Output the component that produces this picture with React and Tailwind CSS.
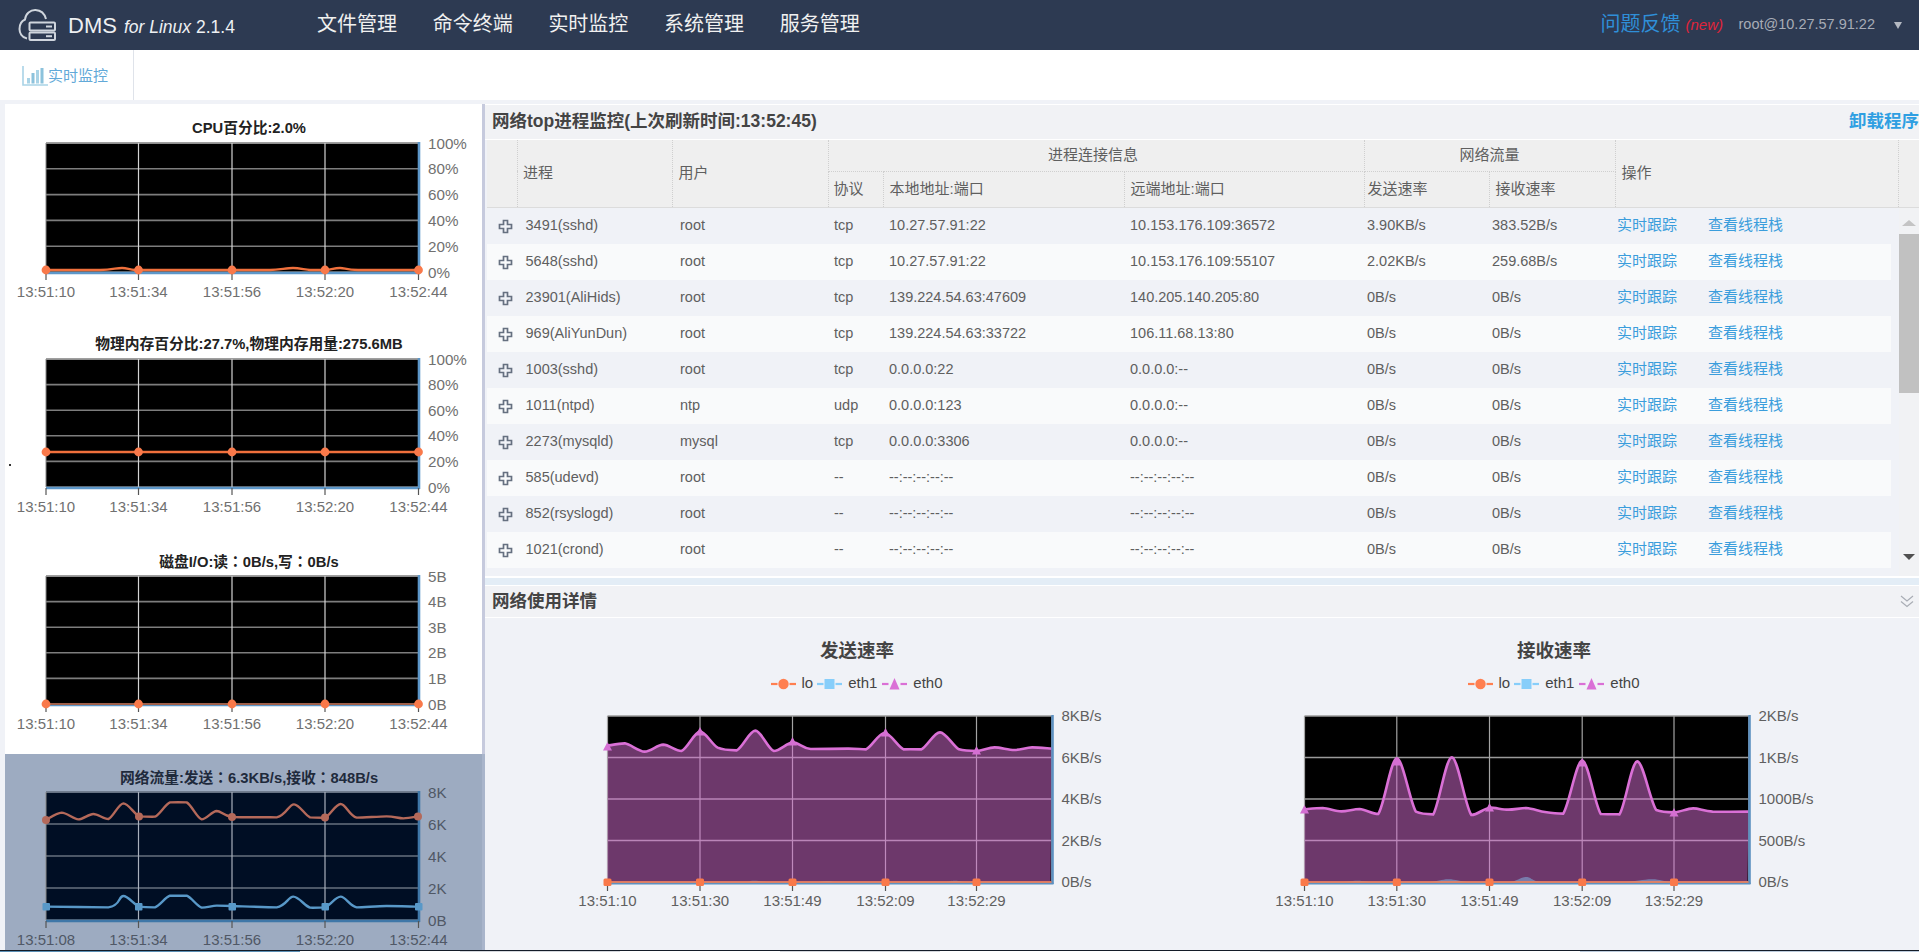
import React from "react";

const FONT = '"Liberation Sans","Noto Sans CJK SC",sans-serif';

function smooth(pts) {
  let d = `M${pts[0][0]} ${pts[0][1]}`;
  for (let i = 0; i < pts.length - 1; i++) {
    const p0 = pts[Math.max(i - 1, 0)];
    const p1 = pts[i];
    const p2 = pts[i + 1];
    const p3 = pts[Math.min(i + 2, pts.length - 1)];
    const t = 0.16;
    let c1y = p1[1] + (p2[1] - p0[1]) * t;
    let c2y = p2[1] - (p3[1] - p1[1]) * t;
    const lo = Math.min(p1[1], p2[1]);
    const hi = Math.max(p1[1], p2[1]);
    c1y = Math.min(hi, Math.max(lo, c1y));
    c2y = Math.min(hi, Math.max(lo, c2y));
    const c1x = p1[0] + (p2[0] - p0[0]) * t;
    const c2x = p2[0] - (p3[0] - p1[0]) * t;
    d += ` C${c1x.toFixed(1)} ${c1y.toFixed(1)} ${c2x.toFixed(1)} ${c2y.toFixed(1)} ${p2[0]} ${p2[1]}`;
  }
  return d;
}

const VX = [46, 138.5, 232, 325, 418.5];

function MiniChart({ top, bottom, yLabels, xLabels, svgTop, height, dark, children }) {
  const n = yLabels.length - 1;
  const ys = yLabels.map((_, i) => top + ((bottom - top) * i) / n);
  const bg = dark ? "#000e24" : "#000000";
  const txt = dark ? "#505866" : "#707070";
  return (
    <svg className="block overflow-visible" width="477" height={height} viewBox={`5 ${svgTop} 477 ${height}`}>
      <rect x={46} y={top} width={372.5} height={bottom - top} fill={bg} />
      {ys.map((y, i) => (
        <line key={i} x1={46} x2={418} y1={y} y2={y} stroke={dark ? "#66707e" : "#7d7d7d"} strokeWidth="1.6" />
      ))}
      <line x1={46} x2={418} y1={top} y2={top} stroke={dark ? "#6f7b8e" : "#a0a0a0"} strokeWidth="1.6" />
      {VX.slice(1, 4).map((x) => (
        <line key={x} x1={x} x2={x} y1={top} y2={bottom} stroke={dark ? "#a8b0bc" : "#d4d4d4"} strokeWidth="1.2" />
      ))}
      <line x1={46} x2={46} y1={top} y2={bottom} stroke="#888888" strokeWidth="1" />
      <line x1={419} x2={419} y1={top - 1} y2={bottom + 2} stroke={dark ? "#3f77a8" : "#5d97c9"} strokeWidth="2.6" />
      <line x1={46} x2={420} y1={bottom + 1} y2={bottom + 1} stroke={dark ? "#3f77a8" : "#5d97c9"} strokeWidth="2.6" />
      {VX.map((x) => (
        <line key={x} x1={x} x2={x} y1={bottom + 1} y2={bottom + 8} stroke="#555555" strokeWidth="1.2" />
      ))}
      {children}
      {yLabels.map((l, i) => (
        <text key={l} x={428} y={ys[i] + 5.5} fontSize="15.2" fill={txt} fontFamily={FONT}>
          {l}
        </text>
      ))}
      {xLabels.map((l, i) => (
        <text key={l + i} x={VX[i]} y={bottom + 24.5} fontSize="15" fill={txt} textAnchor="middle" fontFamily={FONT}>
          {l}
        </text>
      ))}
    </svg>
  );
}

function Dots({ y, fill = "#f9794a" }) {
  return VX.map((x) => <circle key={x} cx={x} cy={y} r="4.4" fill={fill} />);
}

const PCT = ["100%", "80%", "60%", "40%", "20%", "0%"];
const XL = ["13:51:10", "13:51:34", "13:51:56", "13:52:20", "13:52:44"];

const netSend = [[138,240],[185,218],[235,238],[280,222],[325,237],[370,190],[418,229],[465,230],[510,187],[560,187],[605,238],[650,213],[697,231],[830,232],[882,193],[930,232],[975,233],[1022,192],[1070,233],[1160,229],[1210,235],[1254,229]].map(([x, y]) => [x / 3, 740 + y / 3]);
const netRecv = [[138,500],[325,502],[370,468],[418,500],[465,502],[510,467],[560,467],[605,503],[650,497],[697,498],[830,502],[880,470],[930,503],[975,502],[1022,470],[1070,502],[1160,498],[1254,500]].map(([x, y]) => [x / 3, 740 + y / 3]);

const leftEth0 = [[322,527],[365,520],[415,545],[462,524],[508,543],[555,485],[600,533],[648,541],[695,482],[742,543],[790,517],[835,537],[930,536],[975,538],[1022,489],[1070,538],[1115,538],[1162,487],[1210,538],[1255,543],[1300,532],[1350,540],[1395,532],[1445,536]].map(([x, y]) => [480 + x / 2.529, 570 + y / 3]);
const rightEth0 = [[148,718],[190,714],[233,724],[275,717],[318,732],[361,565],[405,725],[445,733],[488,562],[533,735],[575,713],[618,719],[660,714],[703,726],[745,731],[789,572],[832,732],[875,733],[916,574],[960,720],[1002,727],[1045,715],[1090,725],[1173,725]].map(([x, y]) => [1240 + x / 2.309, 570 + y / 3]);
const leftEth1 = [[322,937],[640,937],[690,932],[740,937],[840,937],[880,933],[920,937],[1150,937],[1200,932],[1250,937],[1445,937]].map(([x, y]) => [480 + x / 2.529, 570 + y / 3]);
const rightEth1 = [[148,937],[225,937],[270,932],[318,937],[430,937],[480,928],[530,937],[618,937],[660,921],[703,937],[875,937],[950,928],[1002,937],[1130,937],[1173,932]].map(([x, y]) => [1240 + x / 2.309, 570 + y / 3]);

function BigChart({ x0, x1, vx, svgLeft, yLabels, eth0, eth1, markers }) {
  const top = 716;
  const bottom = 882;
  const ys = yLabels.map((_, i) => top + ((bottom - top) * i) / (yLabels.length - 1));
  const area = `${smooth(eth0)} L${x1 - 1} ${bottom} L${x0} ${bottom} Z`;
  const area1 = `${smooth(eth1)} L${x1 - 1} ${bottom} L${x0} ${bottom} Z`;
  return (
    <svg className="block overflow-visible" width="697" height="250" viewBox={`${svgLeft} 700 697 250`}>
      <rect x={x0} y={top} width={x1 - x0} height={bottom - top} fill="#000000" />
      {ys.map((y) => (
        <line key={y} x1={x0} x2={x1} y1={y} y2={y} stroke="#9a9a9a" strokeWidth="1.3" />
      ))}
      {vx.slice(1).map((x) => (
        <line key={x} x1={x} x2={x} y1={top} y2={bottom} stroke="#a4a4a4" strokeWidth="1.2" />
      ))}
      <line x1={x0} x2={x0} y1={top} y2={bottom} stroke="#a4a4a4" strokeWidth="1.2" />
      <path d={area} fill="#da70d6" fillOpacity="0.5" />
      <path d={area1} fill="#87cefa" fillOpacity="0.45" />
      <path d={smooth(eth0)} fill="none" stroke="#da70d6" strokeWidth="2.6" />
      <line x1={x1 + 1} x2={x1 + 1} y1={top - 1} y2={bottom + 2} stroke="#5d90c0" strokeWidth="2.6" />
      <line x1={x0} x2={x1 + 2} y1={bottom + 1.5} y2={bottom + 1.5} stroke="#5d90c0" strokeWidth="2.2" />
      <line x1={x0} x2={x1} y1={bottom} y2={bottom} stroke="#f47a4c" strokeWidth="1.4" />
      {vx.map((x) => (
        <line key={x} x1={x} x2={x} y1={bottom + 2} y2={bottom + 9} stroke="#555555" strokeWidth="1.2" />
      ))}
      {markers.map(([x, y]) => (
        <path key={x} d={`M${x} ${y - 5} L${x + 4.5} ${y + 3.5} L${x - 4.5} ${y + 3.5} Z`} fill="#d46fd2" />
      ))}
      {vx.map((x) => (
        <rect key={x} x={x - 4} y={bottom - 3.5} width="8" height="7.5" rx="1.5" fill="#f9794a" />
      ))}
      {yLabels.map((l, i) => (
        <text key={l} x={x1 + 10} y={ys[i] + 5} fontSize="15" fill="#606060" fontFamily={FONT}>
          {l}
        </text>
      ))}
      {["13:51:10", "13:51:30", "13:51:49", "13:52:09", "13:52:29"].map((l, i) => (
        <text key={l} x={vx[i]} y={bottom + 24} fontSize="15" fill="#606060" textAnchor="middle" fontFamily={FONT}>
          {l}
        </text>
      ))}
    </svg>
  );
}

function LegendIcon({ color, shape }) {
  return (
    <svg width="25" height="14" viewBox="0 0 25 14" className="shrink-0">
      <line x1="0" x2="6.5" y1="7" y2="7" stroke={color} strokeWidth="2.2" />
      <line x1="18.5" x2="25" y1="7" y2="7" stroke={color} strokeWidth="2.2" />
      {shape === "circle" && <circle cx="12.5" cy="7" r="5.2" fill={color} />}
      {shape === "square" && <rect x="7.5" y="2" width="10" height="10" fill={color} />}
      {shape === "tri" && <path d="M12.5 1 L17.5 12.5 L7.5 12.5 Z" fill={color} />}
    </svg>
  );
}

function Legend() {
  return (
    <div className="flex items-center justify-center h-5 text-[15px] text-[#444444] mt-[11px]">
      <LegendIcon color="#ff7f50" shape="circle" />
      <span className="ml-[5px] mr-[4px]">lo</span>
      <LegendIcon color="#87cefa" shape="square" />
      <span className="ml-[6px] mr-[5px]">eth1</span>
      <LegendIcon color="#da70d6" shape="tri" />
      <span className="ml-[6px]">eth0</span>
    </div>
  );
}

const rows = [
  ["3491(sshd)", "root", "tcp", "10.27.57.91:22", "10.153.176.109:36572", "3.90KB/s", "383.52B/s"],
  ["5648(sshd)", "root", "tcp", "10.27.57.91:22", "10.153.176.109:55107", "2.02KB/s", "259.68B/s"],
  ["23901(AliHids)", "root", "tcp", "139.224.54.63:47609", "140.205.140.205:80", "0B/s", "0B/s"],
  ["969(AliYunDun)", "root", "tcp", "139.224.54.63:33722", "106.11.68.13:80", "0B/s", "0B/s"],
  ["1003(sshd)", "root", "tcp", "0.0.0.0:22", "0.0.0.0:--", "0B/s", "0B/s"],
  ["1011(ntpd)", "ntp", "udp", "0.0.0.0:123", "0.0.0.0:--", "0B/s", "0B/s"],
  ["2273(mysqld)", "mysql", "tcp", "0.0.0.0:3306", "0.0.0.0:--", "0B/s", "0B/s"],
  ["585(udevd)", "root", "--", "--:--:--:--:--", "--:--:--:--:--", "0B/s", "0B/s"],
  ["852(rsyslogd)", "root", "--", "--:--:--:--:--", "--:--:--:--:--", "0B/s", "0B/s"],
  ["1021(crond)", "root", "--", "--:--:--:--:--", "--:--:--:--:--", "0B/s", "0B/s"],
];

function Cols({ last }) {
  return (
    <colgroup>
      <col className="w-[30.5px]" />
      <col className="w-[154.5px]" />
      <col className="w-[156px]" />
      <col className="w-[55px]" />
      <col className="w-[241px]" />
      <col className="w-[240px]" />
      <col className="w-[125px]" />
      <col className="w-[126px]" />
      <col className={last ? "w-[276px]" : "w-[283px]"} />
      {!last && <col className="w-[21px]" />}
    </colgroup>
  );
}

function Plus() {
  return (
    <svg width="15" height="15" viewBox="0 0 15 15" className="block ml-[11px]">
      <path d="M5.5 1.5 H9.5 V5.5 H13.5 V9.5 H9.5 V13.5 H5.5 V9.5 H1.5 V5.5 H5.5 Z" fill="none" stroke="#667080" strokeWidth="1.7" />
    </svg>
  );
}

const th = "font-normal text-left align-middle border-[#cfcfcf] border-dotted";
const CC = "font-['Noto_Sans_CJK_TC']";

export default function App() {
  return (
    <div className="w-[1919px] h-[952px] overflow-hidden bg-[#f0f2f7] flex flex-col text-[#5f5f5f]" style={{ fontFamily: FONT }}>
      {/* top bar */}
      <header className="h-[50px] shrink-0 bg-[#2d3a52] flex items-center relative">
        <svg width="42" height="36" viewBox="15 8 42 36" className="ml-[15px] shrink-0">
          <path d="M27 39.5 C21.5 38.5 19.5 33.5 19.5 30 C19.5 25.5 21.5 22 25 20.5 C25.5 14.5 30.5 10.8 35.5 11 C40.5 11.2 44.5 14.5 46 20" fill="none" stroke="#cfd5dd" strokeWidth="2" />
          <rect x="29.5" y="23.5" width="25.5" height="8" rx="1" fill="#2d3a52" stroke="#cfd5dd" strokeWidth="2" />
          <rect x="29.5" y="33.5" width="25.5" height="7.5" rx="1" fill="#2d3a52" stroke="#cfd5dd" strokeWidth="2" />
          <line x1="46" x2="52" y1="27.5" y2="27.5" stroke="#cfd5dd" strokeWidth="2" />
          <line x1="46" x2="52" y1="37.2" y2="37.2" stroke="#cfd5dd" strokeWidth="2" />
        </svg>
        <div className="ml-[11px] flex items-baseline text-[#eef0f3] w-[249px] shrink-0 whitespace-nowrap">
          <span className="text-[22px]">DMS</span>
          <span className="text-[17.5px] italic ml-[7px]">for Linux</span>
          <span className="text-[17.5px] ml-[5px]">2.1.4</span>
        </div>
        <nav className="flex gap-[35.7px] text-[20px] text-[#f0f0f0] -mt-[3px]">
          <span>文件管理</span>
          <span>命令终端</span>
          <span>实时监控</span>
          <span>系统管理</span>
          <span>服务管理</span>
        </nav>
        <div className="ml-auto flex items-center mr-[17px]">
          <span className="text-[20px] text-[#2f8fd8] -mt-[2px] -ml-[1px]">问题反馈</span>
          <span className="text-[15px] italic text-[#e0243a] ml-[5px] w-[53px]">(new)</span>
          <span className="text-[14.5px] text-[#a7acb6]">root@10.27.57.91:22</span>
          <span className="ml-[19px] w-0 h-0 border-l-[4.5px] border-r-[4.5px] border-t-[7px] border-l-transparent border-r-transparent border-t-[#b4b9c2]" />
        </div>
      </header>

      {/* tab bar */}
      <div className="h-[50px] shrink-0 bg-white flex">
        <div className="w-[134px] border-r border-[#dfe3ea] flex items-center pl-[22px] pt-[3px]">
          <svg width="26" height="22" viewBox="0 0 26 22" className="shrink-0 -mt-[2px]">
            <path d="M1 1 V20 H26" fill="none" stroke="#a9d3e6" strokeWidth="1.6" />
            <rect x="5" y="13" width="3" height="5.5" fill="#a9d3e6" />
            <rect x="9.5" y="8" width="3" height="10.5" fill="#8cc2dc" />
            <rect x="14" y="5" width="3" height="13.5" fill="#a9d3e6" />
            <rect x="18.5" y="3" width="3" height="15.5" fill="#8cc2dc" />
          </svg>
          <span className="text-[15px] text-[#62a9d8] whitespace-nowrap">实时监控</span>
        </div>
      </div>

      <div className="flex-1 min-h-0 flex pt-[4px] relative">
        <span className="absolute left-[9px] top-[364px] w-[2px] h-[2px] bg-[#333333]" />
        {/* left column */}
        <aside className="w-[477px] ml-[5px] shrink-0 bg-white flex flex-col overflow-hidden">
          <div className="h-[216px] shrink-0">
            <div className="h-[33px] pt-[15px] pl-[11px] text-center text-[14.75px] leading-[18px] font-bold text-[#222222]">CPU百分比:2.0%</div>
            <MiniChart top={143} bottom={272} svgTop={137} height={183} yLabels={PCT} xLabels={XL}>
              <path d={smooth([[46,270],[100,270],[122,268],[135,270],[160,270],[232,270],[270,270],[293,268],[310,270],[325,270],[340,268],[358,270],[419,270]])} fill="none" stroke="#f0703c" strokeWidth="2.4" />
              <Dots y={270} />
            </MiniChart>
          </div>
          <div className="h-[217px] shrink-0">
            <div className="h-[33px] pt-[15px] pl-[11px] text-center text-[14.75px] leading-[18px] font-bold text-[#222222]">物理内存百分比:27.7%,物理内存用量:275.6MB</div>
            <MiniChart top={359} bottom={487} svgTop={353} height={184} yLabels={PCT} xLabels={XL}>
              <line x1={46} x2={419} y1={452} y2={452} stroke="#f0703c" strokeWidth="2.6" />
              <Dots y={452} />
            </MiniChart>
          </div>
          <div className="h-[217px] shrink-0">
            <div className="h-[33px] pt-[15px] pl-[11px] text-center text-[14.75px] leading-[18px] font-bold text-[#222222]">磁盘I/O:读<span className={CC}>：</span>0B/s,写<span className={CC}>：</span>0B/s</div>
            <MiniChart top={576} bottom={704} svgTop={570} height={184} yLabels={["5B", "4B", "3B", "2B", "1B", "0B"]} xLabels={XL}>
              <line x1={46} x2={419} y1={704} y2={704} stroke="#a0604a" strokeWidth="2" />
              <Dots y={704} />
            </MiniChart>
          </div>
          <div className="flex-1 min-h-0 bg-[#9dabc1] overflow-hidden">
            <div className="h-[32px] pt-[14px] pl-[11px] text-center text-[14.75px] leading-[18px] font-bold text-[#1f2a3c]">网络流量:发送<span className={CC}>：</span>6.3KB/s,接收<span className={CC}>：</span>848B/s</div>
            <MiniChart top={792} bottom={920} svgTop={786} height={164} dark yLabels={["8K", "6K", "4K", "2K", "0B"]} xLabels={["13:51:08", "13:51:34", "13:51:56", "13:52:20", "13:52:44"]}>
              <path d={smooth(netSend)} fill="none" stroke="#b4695a" strokeWidth="2.4" />
              <path d={smooth(netRecv)} fill="none" stroke="#5898c8" strokeWidth="2.4" />
              {[[46,820],[139,816.5],[232,817],[325,817.5],[418,816.5]].map(([x, y]) => (
                <circle key={x} cx={x} cy={y} r="4" fill="#b4695a" />
              ))}
              {VX.map((x) => (
                <rect key={x} x={x - 3.5} y={903} width="7.5" height="7.5" rx="1" fill="#5898c8" />
              ))}
            </MiniChart>
          </div>
        </aside>

        {/* splitter */}
        <div className="w-[3px] shrink-0 flex flex-col">
          <div className="h-[650px] bg-[#c6cadd]" />
          <div className="flex-1 bg-[#a9b5cb]" />
        </div>

        {/* right column */}
        <main className="w-[1434px] shrink-0 flex flex-col">
          <section className="h-[35px] shrink-0 border-t border-white flex items-center justify-between pl-[7px] pb-[2px] bg-[#f1f2f5]">
            <h2 className="text-[17.5px] font-bold text-[#444444] whitespace-nowrap">网络top进程监控(上次刷新时间:13:52:45)</h2>
            <a className="text-[17.5px] font-bold text-[#2f9fe2] whitespace-nowrap -ml-[1px]">卸载程序</a>
          </section>
          <div className="h-[1px] shrink-0 bg-white" />

          <div className="pl-[2px] shrink-0">
            <table className="table-fixed border-collapse w-[1432px] text-[15px] text-[#5f5f5f] bg-[#efefef]">
              <Cols />
              <thead>
                <tr className="h-[31px]">
                  <th rowSpan={2} className={`${th} border-r`} />
                  <th rowSpan={2} className={`${th} border-r pl-[5px]`}>进程</th>
                  <th rowSpan={2} className={`${th} border-r pl-[6px]`}>用户</th>
                  <th colSpan={3} className={`${th} border-r border-b pr-[6px]`} style={{ textAlign: "center" }}>进程连接信息</th>
                  <th colSpan={2} className={`${th} border-r border-b`} style={{ textAlign: "center" }}>网络流量</th>
                  <th rowSpan={2} className={`${th} border-r pl-[6px]`}>操作</th>
                  <th rowSpan={2} className={th} />
                </tr>
                <tr className="h-[36px]">
                  <th className={`${th} border-r pl-[5px]`}>协议</th>
                  <th className={`${th} border-r pl-[6px]`}>本地地址:端口</th>
                  <th className={`${th} border-r pl-[6px]`}>远端地址:端口</th>
                  <th className={`${th} border-r pl-[3px]`}>发送速率</th>
                  <th className={`${th} border-r pl-[6px]`}>接收速率</th>
                </tr>
              </thead>
            </table>
          </div>
          <div className="h-[1px] shrink-0 bg-[#dcdcdc] ml-[2px]" />

          <div className="h-[368px] shrink-0 flex pl-[2px]">
            <div className="w-[1404px] shrink-0">
              <table className="table-fixed border-collapse w-[1404px] text-[14.5px] text-[#5f5f5f]">
                <Cols last />
                <tbody>
                  {rows.map((r, i) => (
                    <tr key={r[0]} className={i % 2 === 0 ? "h-[36px] bg-[#f0f2f7]" : "h-[36px] bg-[#f9fafb]"}>
                      <td><Plus /></td>
                      <td className="pl-[8px]">{r[0]}</td>
                      <td className="pl-[8px]">{r[1]}</td>
                      <td className="pl-[6px]">{r[2]}</td>
                      <td className="pl-[6px]">{r[3]}</td>
                      <td className="pl-[6px]">{r[4]}</td>
                      <td className="pl-[3px]">{r[5]}</td>
                      <td className="pl-[3px]">{r[6]}</td>
                      <td className="pl-[2px] pb-[2px] text-[15px] text-[#3a9ddc]">
                        <span className="inline-block w-[91px]">实时跟踪</span>
                        <span>查看线程栈</span>
                      </td>
                    </tr>
                  ))}
                </tbody>
              </table>
            </div>
            <div className="w-[8px] shrink-0" />
            <div className="w-[20px] shrink-0 bg-[#f1f2f4] flex flex-col items-center">
              <span className="mt-[12px] w-0 h-0 border-l-[7px] border-r-[7px] border-b-[6px] border-l-transparent border-r-transparent border-b-[#c4c4c4]" />
              <span className="mt-[8px] w-[20px] h-[159px] bg-[#c1c1c1]" />
              <span className="mt-[161px] w-0 h-0 border-l-[6px] border-r-[6px] border-t-[6px] border-l-transparent border-r-transparent border-t-[#505050]" />
            </div>
          </div>

          <div className="h-[1.5px] shrink-0 bg-white" />
          <div className="h-[7px] shrink-0 bg-[#e3edf6]" />
          <div className="h-[1px] shrink-0 bg-white" />
          <section className="h-[32px] shrink-0 flex items-center justify-between pl-[7px] pr-[5px] bg-[#f1f2f5] border-b border-white">
            <h2 className="text-[17.5px] font-bold text-[#444444]">网络使用详情</h2>
            <svg width="14" height="14" viewBox="0 0 14 14">
              <path d="M1 2 L7 7 L13 2 M1 7.5 L7 12.5 L13 7.5" fill="none" stroke="#a9adb5" strokeWidth="1.2" />
            </svg>
          </section>

          <div className="flex-1 min-h-0 flex pl-[23.5px] overflow-hidden">
            <div className="w-[697px] shrink-0 pt-[21px]">
              <div className="text-center text-[18.5px] leading-[24px] font-bold text-[#444444]">发送速率</div>
              <Legend />
              <div className="mt-[6px]">
                <BigChart x0={607} x1={1051} vx={[607, 699.5, 792, 885, 976]} svgLeft={508.5} yLabels={["8KB/s", "6KB/s", "4KB/s", "2KB/s", "0B/s"]} eth0={leftEth0} eth1={leftEth1}
                  markers={[[607, 747], [699.5, 732], [792, 742], [885, 733], [976, 751]]} />
              </div>
            </div>
            <div className="w-[697px] shrink-0 pt-[21px]">
              <div className="text-center text-[18.5px] leading-[24px] font-bold text-[#444444]">接收速率</div>
              <Legend />
              <div className="mt-[6px]">
                <BigChart x0={1304} x1={1748} vx={[1304, 1396.3, 1489, 1581.7, 1673.5]} svgLeft={1205.5} yLabels={["2KB/s", "1KB/s", "1000B/s", "500B/s", "0B/s"]} eth0={rightEth0} eth1={rightEth1}
                  markers={[[1304, 810], [1396.3, 762], [1489, 808], [1581.7, 763], [1673.5, 813]]} />
              </div>
            </div>
          </div>
        </main>
      </div>

      {/* strip of whatever lies below the page */}
      <div className="h-[2px] shrink-0 flex flex-col">
        <div className="h-[1px] bg-[#141c28]" />
        <div className="h-[1px] flex">
          <div className="w-[300px] bg-[#5b8fb5]" />
          <div className="w-[160px] bg-white" />
          <div className="w-[160px] bg-[#d5d8dd]" />
          <div className="w-[160px] bg-white" />
          <div className="w-[160px] bg-[#d5d8dd]" />
          <div className="w-[320px] bg-white" />
          <div className="w-[160px] bg-[#d5d8dd]" />
          <div className="w-[160px] bg-white" />
          <div className="flex-1 bg-[#bccbdc]" />
        </div>
      </div>
    </div>
  );
}
